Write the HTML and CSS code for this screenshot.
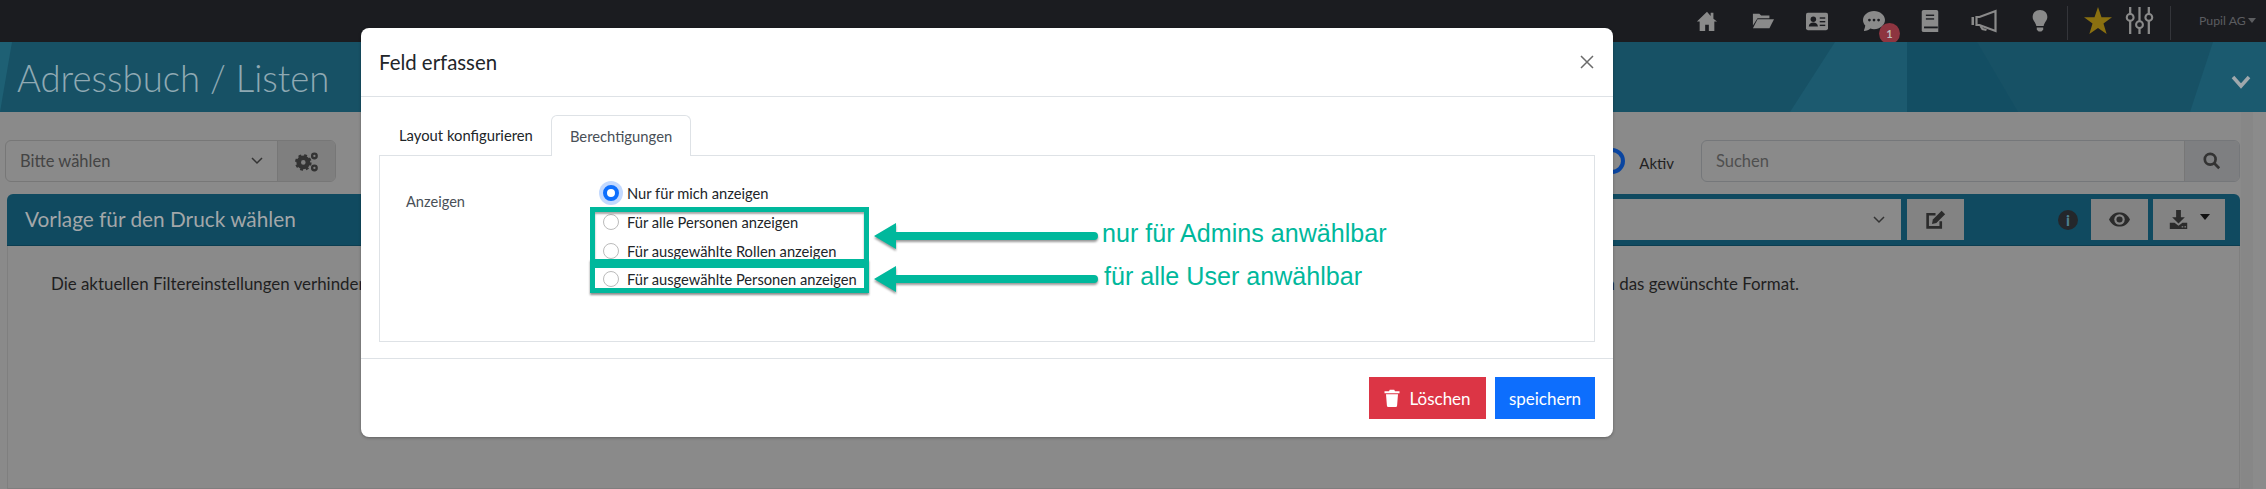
FILE: index.html
```html
<!DOCTYPE html>
<html lang="de">
<head>
  <meta charset="UTF-8">
  <title>Adressbuch / Listen</title>
  <link rel="stylesheet" href="styles.css">
</head>
<body>

  <!-- Top navigation -->
  <div class="topbar">
    <svg class="nav-icon home" viewBox="0 0 24 24"><path d="M12 2 1 12.5h3V23h6v-7h4v7h6V12.5h3L19 9.5V3h-3v3.6z"/></svg>
    <svg class="nav-icon folder" viewBox="0 0 24 24"><path d="M1 4h7l2 2h9v3H6l-5 8z"/><path d="M6 10h18l-5 10H1z"/></svg>
    <svg class="nav-icon card-ico" viewBox="0 0 24 24"><rect x="0" y="3" width="24" height="19" rx="2"/><circle class="cut" cx="8" cy="10" r="3"/><path class="cut" d="M3 18c0-6 10-6 10 0z"/><rect class="cut" x="15" y="8" width="6" height="1.5"/><rect class="cut" x="15" y="12" width="6" height="1.5"/><rect class="cut" x="15" y="16" width="6" height="1.5"/></svg>
    <svg class="nav-icon comment" viewBox="0 0 24 24"><path d="M12 1C5.500 1 0 5.500 0 11c0 2.500 1 4.500 2.500 6C2.200 19.500 1 22 1 23c3 0 5.500-1.500 7-2.800 1.300.5 2.600.8 4 .8 6.500 0 12-4.500 12-10S18.500 1 12 1z"/><circle class="cut" cx="7" cy="11" r="1.500"/><circle class="cut" cx="12" cy="11" r="1.500"/><circle class="cut" cx="17" cy="11" r="1.500"/></svg>
    <span class="badge">1</span>
    <svg class="nav-icon book" viewBox="0 0 24 24"><path d="M5 0h14a2 2 0 0 1 2 2v22H5a2 2 0 0 1-2-2V2a2 2 0 0 1 2-2z"/><rect class="cut" x="7.500" y="5" width="9" height="1.500"/><rect class="cut" x="7.500" y="9" width="9" height="1.500"/><rect class="cut" x="5.500" y="18" width="15" height="2"/></svg>
    <svg class="nav-icon mega" viewBox="0 0 26 24"><path class="line" d="M24 2v20L8 16H5V8h3z"/><path class="line" d="M9 17l2 3 4 1"/><rect x="0" y="8" width="2.500" height="8"/></svg>
    <svg class="nav-icon bulb" viewBox="0 0 24 24"><path d="M12 0c-5 0-8 3.500-8 7.500 0 4 3.500 6 4 10h8c.5-4 4-6 4-10C20 3.500 17 0 12 0z"/><path d="M8.500 19h7v2.500l-2 2h-3l-2-2z"/></svg>
    <span class="nav-sep sep-a"></span>
    <svg class="nav-icon star" viewBox="0 0 24 24"><path d="M12 0l3 8.700h9l-7.300 5.500 2.700 9L12 17.900l-7.400 5.300 2.700-9L0 8.700h9z"/></svg>
    <svg class="nav-icon sliders" viewBox="0 0 28 28"><path class="line" d="M5 1v26M14 1v26M23 1v26"/><circle class="knob" cx="5" cy="11" r="3.300"/><circle class="knob" cx="14" cy="18" r="3.300"/><circle class="knob" cx="23" cy="11" r="3.300"/></svg>
    <span class="nav-sep sep-b"></span>
    <span class="user">Pupil AG</span><span class="user-caret"></span>
  </div>

  <!-- Title band -->
  <div class="band">
    <svg class="band-art" viewBox="0 0 2266 70" preserveAspectRatio="none">
      <polygon points="1790,70 1835,0 1907,0 1907,70" fill="#1c5a6f"/>
      <polygon points="1907,0 1977,0 2018,70 1907,70" fill="#134e63"/>
      <polygon points="0,70 0,0 12,0" fill="#1e6074"/>
      <polygon points="2190,70 2213,0 2266,0 2266,70" fill="#1b5a6f"/>
    </svg>
    <h1>Adressbuch / Listen</h1>
    <svg class="band-chevron" viewBox="0 0 20 14"><path d="M2 2l8 9 8-9"/></svg>
  </div>

  <!-- Filter row -->
  <div class="toolbar">
    <div class="input-group left-group">
      <span class="field">Bitte wählen<svg class="chev" viewBox="0 0 12 8"><path d="M1 1l5 5 5-5"/></svg></span>
      <span class="addon">
        <svg class="cogs" viewBox="0 0 26 24"><circle cx="9" cy="13" r="5" class="cog"/><circle cx="9" cy="13" r="7.500" class="teeth"/><circle cx="21" cy="6" r="2.500" class="cog thin"/><circle cx="21" cy="19" r="2.500" class="cog thin"/></svg>
      </span>
    </div>
    <div class="toolbar-right">
      <span class="ring"></span>
      <span class="aktiv">Aktiv</span>
      <div class="input-group search-group">
        <span class="field muted">Suchen</span>
        <span class="addon">
          <svg class="search" viewBox="0 0 20 20"><circle cx="8" cy="8" r="6"/><path d="M12.500 12.500 18 18"/></svg>
        </span>
      </div>
    </div>
  </div>

  <!-- Print template card -->
  <div class="print-card">
    <div class="print-head">
      <span class="print-title">Vorlage für den Druck wählen</span>
      <span class="print-select"><svg class="chev" viewBox="0 0 12 8"><path d="M1 1l5 5 5-5"/></svg></span>
      <span class="head-btn edit-btn">
        <svg viewBox="0 0 24 24"><path class="stroke" d="M18 14v7H3V6h9"/><path class="solid" d="M9 12 19 2l4 4-10 10-5 1z"/></svg>
      </span>
      <span class="info">i</span>
      <span class="head-btn eye-btn">
        <svg viewBox="0 0 24 24"><path class="solid" d="M0 12C3 6 7 4 12 4s9 2 12 8c-3 6-7 8-12 8S3 18 0 12z"/><circle class="hole" cx="12" cy="12" r="6"/><circle class="solid" cx="12" cy="12" r="3.500"/></svg>
      </span>
      <span class="head-btn dl-btn">
        <svg viewBox="0 0 24 24"><path class="solid" d="M9 0h6v9h5l-8 8-8-8h5z"/><path class="solid" d="M1 16h6l5 4 5-4h6v8H1z"/><rect class="hole" x="16" y="20.500" width="2" height="1.500"/><rect class="hole" x="19.500" y="20.500" width="2" height="1.500"/></svg>
        <i class="caret"></i>
      </span>
    </div>
    <div class="print-body">
      <span>Die aktuellen Filtereinstellungen verhindern</span>
      <span>in das gewünschte Format.</span>
    </div>
  </div>

  <!-- Dialog -->
  <div class="modal">
    <div class="modal-head">
      <h2>Feld erfassen</h2>
      <svg class="close" viewBox="0 0 16 16"><path d="M2 2l12 12M14 2 2 14"/></svg>
    </div>
    <div class="modal-body">
      <div class="tabs">
        <span class="tab">Layout konfigurieren</span>
        <span class="tab active">Berechtigungen</span>
      </div>
      <div class="panel">
        <div class="form-label">Anzeigen</div>
        <div class="radios">
          <label class="radio checked"><i></i>Nur für mich anzeigen</label>
          <label class="radio"><i></i>Für alle Personen anzeigen</label>
          <label class="radio"><i></i>Für ausgewählte Rollen anzeigen</label>
          <label class="radio"><i></i>Für ausgewählte Personen anzeigen</label>
        </div>
      </div>
    </div>
    <div class="modal-foot">
      <button class="btn danger">
        <svg viewBox="0 0 20 24"><path d="M0 3h6l1-2h6l1 2h6v2.500H0z"/><path d="M2 7h16l-1.200 15a2 2 0 0 1-2 2H5.200a2 2 0 0 1-2-2z"/></svg>
        Löschen
      </button>
      <button class="btn primary">speichern</button>
    </div>
  </div>

  <!-- Annotations drawn over the screenshot -->
  <div class="mark mark-a"></div>
  <div class="mark mark-b"></div>
  <svg class="arrow arrow-a" viewBox="0 0 224 26"><path d="M0 13 22 0v9h198a4 4 0 0 1 0 8H22v9z"/></svg>
  <svg class="arrow arrow-b" viewBox="0 0 224 26"><path d="M0 13 22 0v9h198a4 4 0 0 1 0 8H22v9z"/></svg>
  <span class="note note-a">nur für Admins anwählbar</span>
  <span class="note note-b">für alle User anwählbar</span>

</body>
</html>
```

FILE: styles.css
```css
* {
  box-sizing: border-box;
}

body {
  margin: 0;
  height: 489px;
  overflow: hidden;
  position: relative;
  background: linear-gradient(90deg, #8a8a8a 2241px, #878787 2241px, #878787 2253px, #8b8b8b 2253px);
  font-family: Lato, "Noto Sans", sans-serif;
  font-size: 16.900px;
  color: #1f1f1f;
}

/* top navigation */
.topbar {
  height: 42px;
  background-color: #1b1c20;
  position: relative;
}

.nav-icon {
  position: absolute;
  top: 10px;
  width: 22px;
  height: 22px;
  fill: #8a8a8a;
}

.nav-icon .cut {
  fill: #1b1c20;
}

.nav-icon .line {
  fill: none;
  stroke: #8a8a8a;
  stroke-width: 2.2;
}

.home { left: 1696px; }
.folder { left: 1752px; }
.card-ico { left: 1806px; }
.comment { left: 1863px; }
.book { left: 1919px; }
.mega { left: 1971px; width: 27px; height: 24px; top: 9px; }
.bulb { left: 2029px; }
.star { left: 2084px; width: 28px; height: 28px; top: 7px; fill: #8a7010; }
.sliders { left: 2125px; width: 29px; height: 29px; top: 6px; }

.sliders .knob {
  fill: #1b1c20;
  stroke: #8a8a8a;
  stroke-width: 2;
}

.badge {
  position: absolute;
  left: 1879px;
  top: 23px;
  width: 21px;
  height: 21px;
  border-radius: 50%;
  background-color: #8e3540;
  color: #bdbdbd;
  font-size: 11px;
  font-weight: 700;
  line-height: 21px;
  text-align: center;
}

.nav-sep {
  position: absolute;
  top: 6px;
  width: 1px;
  height: 34px;
  background-color: #34353a;
}

.sep-a { left: 2067px; }
.sep-b { left: 2170px; }

.user {
  position: absolute;
  left: 2199px;
  top: 13px;
  font-size: 12.300px;
  color: #5c5d60;
}

.user-caret {
  position: absolute;
  left: 2248px;
  top: 18px;
  border: 5px solid transparent;
  border-top-color: #5c5d60;
  border-left-width: 4.500px;
  border-right-width: 4.500px;
  border-bottom-width: 0;
}

/* title band */
.band {
  height: 70px;
  background-color: #175165;
  position: relative;
  display: flex;
  align-items: center;
  padding-left: 17px;
}

.band-art {
  position: absolute;
  left: 0;
  top: 0;
  width: 100%;
  height: 100%;
}

.band h1 {
  position: relative;
  margin: 0;
  padding-top: 1px;
  font-size: 36.500px;
  font-weight: 300;
  color: #8fa9b3;
}

.band-chevron {
  position: absolute;
  left: 2231px;
  top: 33px;
  width: 20px;
  height: 14px;
  fill: none;
  stroke: #a0a8ac;
  stroke-width: 3.500;
}

/* filter row */
.toolbar {
  display: flex;
  align-items: center;
  padding: 28px 26px 0 5px;
}

.input-group {
  display: flex;
  height: 42px;
  border: 1px solid #777;
  border-radius: 6px;
  overflow: hidden;
}

.left-group {
  width: 331px;
}

.field {
  flex: 1;
  display: flex;
  align-items: center;
  justify-content: space-between;
  padding: 0 14px 1px;
  color: #444;
  font-size: 16.500px;
}

.muted {
  color: #4f4f4f;
}

.chev {
  width: 12px;
  height: 8px;
  fill: none;
  stroke: #333;
  stroke-width: 1.500;
}

.addon {
  width: 58px;
  display: flex;
  align-items: center;
  justify-content: center;
  border-left: 1px solid #777;
  background-color: #7f7f7f;
}

.cogs {
  width: 24px;
  height: 23px;
}

.cog {
  fill: none;
  stroke: #333;
  stroke-width: 5;
}

.cog.thin {
  stroke-width: 2.500;
}

.teeth {
  fill: none;
  stroke: #333;
  stroke-width: 3;
  stroke-dasharray: 3 3;
}

.toolbar-right {
  margin-left: auto;
  display: flex;
  align-items: center;
}

.ring {
  width: 26px;
  height: 26px;
  border: 4px solid #0a45a0;
  border-radius: 50%;
  margin-right: 14px;
}

.aktiv {
  margin: 4px 27px 0 0;
  color: #222;
  font-size: 15px;
}

.search-group {
  width: 539px;
  border-color: #75777a;
}

.search-group .addon {
  width: 55px;
  background-color: #7e7f81;
}

.search {
  width: 18px;
  height: 18px;
  fill: none;
  stroke: #333;
  stroke-width: 3;
}

/* print template card */
.print-card {
  margin: 12px 26px 0 7px;
}

.print-head {
  height: 52px;
  display: flex;
  align-items: center;
  background-color: #104a60;
  border-bottom: 1px solid #0c3e51;
  border-radius: 6px 6px 0 0;
  padding: 0 15px 0 18px;
}

.print-title {
  font-size: 20.800px;
  color: #a3a7a9;
  padding-bottom: 2px;
}

.print-select {
  margin-left: auto;
  width: 400px;
  height: 41px;
  background-color: #8a8a8a;
  display: flex;
  align-items: center;
  justify-content: flex-end;
  padding-right: 16px;
}

.head-btn {
  height: 41px;
  width: 57px;
  background-color: #838383;
  display: flex;
  align-items: center;
  justify-content: center;
}

.head-btn svg {
  width: 21px;
  height: 21px;
}

.edit-btn {
  margin-left: 6px;
}

.stroke {
  fill: none;
  stroke: #2b2b2b;
  stroke-width: 3;
}

.solid {
  fill: #2b2b2b;
}

.hole {
  fill: #838383;
}

.info {
  width: 20px;
  height: 20px;
  margin: 0 13px 0 94px;
  border-radius: 50%;
  background-color: #24272b;
  color: #4d7f90;
  font-style: normal;
  font-weight: 900;
  font-size: 15px;
  line-height: 20px;
  text-align: center;
}

.dl-btn {
  width: 72px;
  margin-left: 5px;
  gap: 12px;
}

.dl-btn svg {
  width: 19px;
}

.caret {
  border: 5px solid transparent;
  border-top: 6px solid #111;
  border-bottom: 0;
  margin-bottom: 6px;
}

.print-body {
  height: 243px;
  display: flex;
  justify-content: space-between;
  padding: 27px 440px 0 43px;
  border: 1px solid #7f7f7f;
  border-top: 0;
}

/* dialog */
.modal {
  position: absolute;
  left: 361px;
  top: 28px;
  width: 1252px;
  height: 409px;
  display: flex;
  flex-direction: column;
  background-color: #fff;
  border-radius: 8px;
  box-shadow: 0 1px 3px rgba(0, 0, 0, 0.3);
}

.modal-head {
  height: 69px;
  flex: none;
  display: flex;
  align-items: center;
  justify-content: space-between;
  padding: 0 18px;
  border-bottom: 1px solid #dee2e6;
}

.modal-head h2 {
  margin: 0;
  font-size: 20.400px;
  font-weight: 400;
  color: #212529;
}

.close {
  width: 16px;
  height: 16px;
  fill: none;
  stroke: #6b6b6b;
  stroke-width: 1.500;
}

.modal-body {
  height: 262px;
  flex: none;
  padding: 18px 18px 0;
  border-bottom: 1px solid #dee2e6;
}

.tabs {
  display: flex;
  height: 40px;
  padding-left: 2px;
}

.tab {
  display: flex;
  align-items: center;
  padding: 0 18px;
  color: #212529;
  font-size: 14.800px;
}

.tab.active {
  color: #495057;
  background-color: #fff;
  border: 1px solid #dee2e6;
  border-bottom: 0;
  border-radius: 6px 6px 0 0;
  margin-bottom: -1px;
  position: relative;
}

.panel {
  height: 187px;
  display: flex;
  padding: 23px 26px 0;
  border: 1px solid #dee2e6;
}

.form-label {
  width: 197px;
  padding-top: 14px;
  color: #495057;
  font-size: 14.600px;
}

.radio {
  height: 28.700px;
  display: flex;
  align-items: center;
  gap: 8px;
  font-size: 14.700px;
  color: #212529;
}

.radio i {
  width: 16px;
  height: 16px;
  border: 1px solid #bbb;
  border-radius: 50%;
  background-color: #fff;
}

.radio.checked i {
  border: 4.500px solid #0d6efd;
  box-shadow: 0 0 0 4px #c3d9fe;
}

.modal-foot {
  flex: 1;
  display: flex;
  justify-content: flex-end;
  align-items: flex-start;
  gap: 9px;
  padding: 18px 18px 0;
}

.btn {
  height: 42px;
  border: none;
  color: #fff;
  font-family: inherit;
  font-size: 17px;
  display: flex;
  align-items: center;
  justify-content: center;
  gap: 9px;
}

.btn svg {
  width: 16px;
  height: 18px;
  fill: #fff;
}

.danger {
  width: 117px;
  background-color: #dc3545;
}

.primary {
  width: 100px;
  background-color: #0d6efd;
}

/* annotations */
.mark {
  position: absolute;
  left: 590px;
  width: 279px;
  border: 5px solid #00b89c;
}

.mark-a {
  top: 207px;
  height: 61px;
  border-bottom-width: 9px;
  box-shadow: inset 0 2px 2px rgba(0, 0, 0, 0.35);
}

.mark-b {
  top: 259px;
  height: 34px;
  border-top-width: 9px;
  box-shadow: 0 2px 2px rgba(0, 0, 0, 0.45);
}

.arrow {
  position: absolute;
  left: 874px;
  width: 224px;
  height: 26px;
  fill: #00b89c;
  filter: drop-shadow(0 2px 1px rgba(0, 0, 0, 0.4));
}

.arrow-a { top: 223px; }
.arrow-b { top: 266px; }

.note {
  position: absolute;
  font-family: "Liberation Sans", Arial, sans-serif;
  font-size: 25.100px;
  color: #00b89c;
}

.note-a { left: 1102px; top: 219px; }
.note-b { left: 1104px; top: 262px; }
```
